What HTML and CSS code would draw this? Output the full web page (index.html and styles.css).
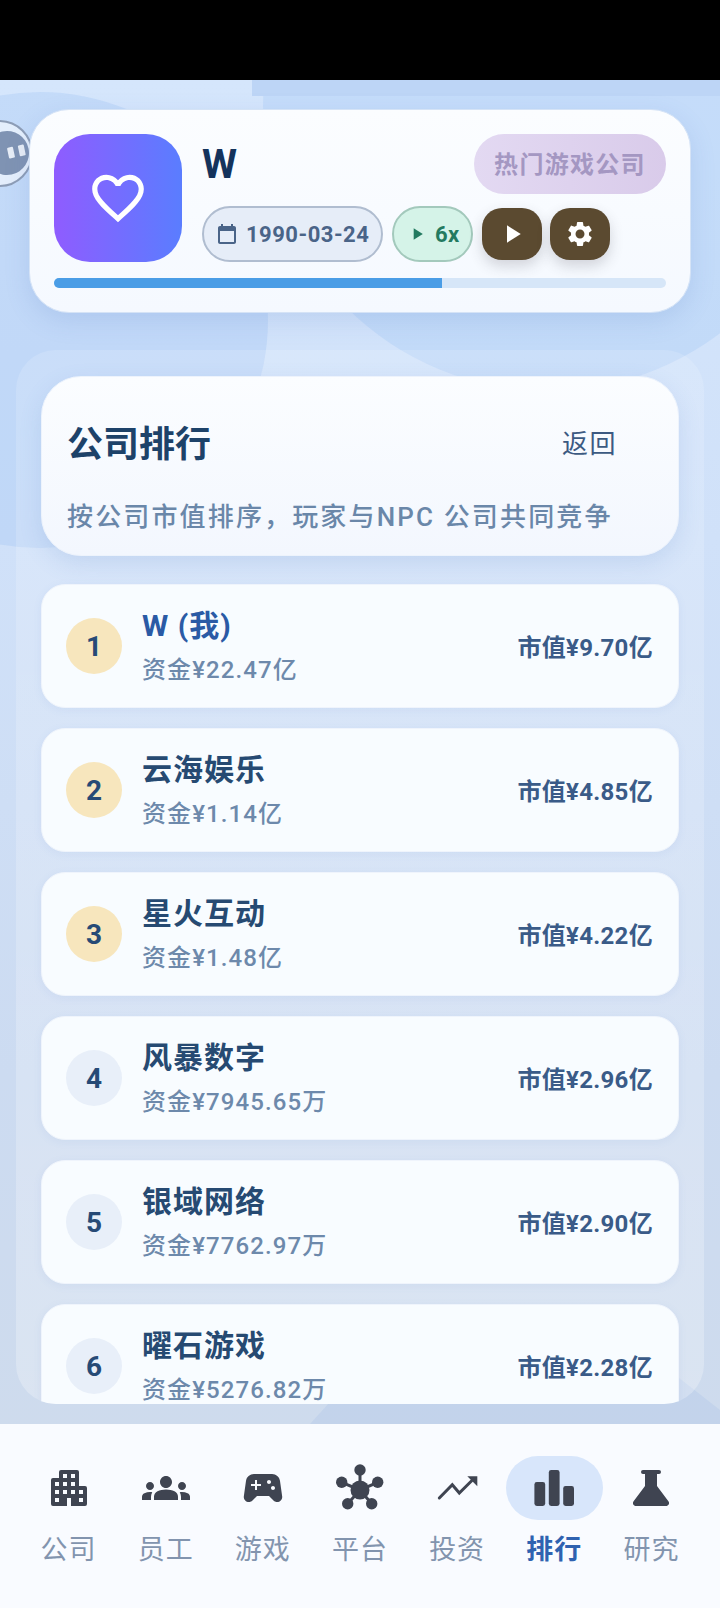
FILE: index.html
```html
<!DOCTYPE html>
<html lang="zh">
<head>
<meta charset="UTF-8">
<title>公司排行</title>
<link rel="stylesheet" href="styles.css">
</head>
<body>
<div class="statusbar"></div>
<div class="app">
    <div class="bg-left"></div>
    <div class="bg-right"></div>
    <div class="bg-band"></div>
    <div class="bg-bottom"></div>

    <div class="float-btn">
        <div class="float-inner">
            <span class="pause-bar"></span>
            <span class="pause-bar"></span>
        </div>
    </div>

    <section class="top-card">
        <div class="top-main">
            <div class="logo">
                <svg viewBox="0 0 24 24" width="62" height="62"><path fill="#fff" d="M16.5 3c-1.74 0-3.41.81-4.5 2.09C10.91 3.81 9.24 3 7.5 3 4.42 3 2 5.42 2 8.5c0 3.78 3.4 6.86 8.55 11.54L12 21.35l1.45-1.32C18.6 15.36 22 12.28 22 8.5 22 5.42 19.58 3 16.5 3zm-4.4 15.55l-.1.1-.1-.1C7.14 14.24 4 11.39 4 8.5 4 6.5 5.5 5 7.5 5c1.54 0 3.04.99 3.57 2.36h1.87C13.46 5.99 14.96 5 16.5 5c2 0 3.5 1.5 3.5 3.5 0 2.89-3.14 5.74-7.9 10.05z"/></svg>
            </div>
            <div class="top-info">
                <div class="top-line">
                    <div class="company-name">W</div>
                    <div class="hot-tag">热门游戏公司</div>
                </div>
                <div class="top-tools">
                    <div class="pill pill-date">
                        <svg viewBox="0 0 24 24" width="24" height="24"><path fill="#4a6488" d="M19 4h-1V2h-2v2H8V2H6v2H5c-1.1 0-2 .9-2 2v14c0 1.1.9 2 2 2h14c1.1 0 2-.9 2-2V6c0-1.1-.9-2-2-2zm0 16H5V9h14v11z"/></svg>
                        <span>1990-03-24</span>
                    </div>
                    <div class="pill pill-speed">
                        <svg viewBox="0 0 24 24" width="20" height="20"><path fill="#237a60" d="M8 5v14l11-7z"/></svg>
                        <span>6x</span>
                    </div>
                    <div class="tool-btn">
                        <svg viewBox="0 0 24 24" width="30" height="30"><path fill="#fff" d="M8 5v14l11-7z"/></svg>
                    </div>
                    <div class="tool-btn">
                        <svg viewBox="0 0 24 24" width="30" height="30"><path fill="#fff" d="M19.14 12.94c.04-.3.06-.61.06-.94 0-.32-.02-.64-.07-.94l2.03-1.58c.18-.14.23-.41.12-.61l-1.92-3.32c-.12-.22-.37-.29-.59-.22l-2.39.96c-.5-.38-1.03-.7-1.62-.94l-.36-2.54c-.04-.24-.24-.41-.48-.41h-3.84c-.24 0-.43.17-.47.41l-.36 2.54c-.59.24-1.13.57-1.62.94l-2.39-.96c-.22-.08-.47 0-.59.22L2.74 8.87c-.12.21-.08.47.12.61l2.03 1.58c-.05.3-.09.63-.09.94s.02.64.07.94l-2.03 1.58c-.18.14-.23.41-.12.61l1.92 3.32c.12.22.37.29.59.22l2.39-.96c.5.38 1.03.7 1.62.94l.36 2.54c.05.24.24.41.48.41h3.84c.24 0 .44-.17.47-.41l.36-2.54c.59-.24 1.13-.56 1.62-.94l2.39.96c.22.08.47 0 .59-.22l1.92-3.32c.12-.22.07-.47-.12-.61l-2.01-1.58zM12 15.6c-1.98 0-3.6-1.62-3.6-3.6s1.62-3.6 3.6-3.6 3.6 1.62 3.6 3.6-1.62 3.6-3.6 3.6z"/></svg>
                    </div>
                </div>
            </div>
        </div>
        <div class="progress"><div class="progress-fill"></div></div>
    </section>

    <main class="panel">
        <div class="head-card">
            <div class="head-line">
                <h1 class="head-title">公司排行</h1>
                <span class="head-back">返回</span>
            </div>
            <p class="head-sub">按公司市值排序，玩家与NPC 公司共同竞争</p>
        </div>

        <div class="rank-list">
            <div class="rank-row">
                <div class="rank-no rank-top">1</div>
                <div class="rank-info">
                    <div class="rank-name rank-me">W (我)</div>
                    <div class="rank-cash">资金¥22.47亿</div>
                </div>
                <div class="rank-value">市值¥9.70亿</div>
            </div>
            <div class="rank-row">
                <div class="rank-no rank-top">2</div>
                <div class="rank-info">
                    <div class="rank-name">云海娱乐</div>
                    <div class="rank-cash">资金¥1.14亿</div>
                </div>
                <div class="rank-value">市值¥4.85亿</div>
            </div>
            <div class="rank-row">
                <div class="rank-no rank-top">3</div>
                <div class="rank-info">
                    <div class="rank-name">星火互动</div>
                    <div class="rank-cash">资金¥1.48亿</div>
                </div>
                <div class="rank-value">市值¥4.22亿</div>
            </div>
            <div class="rank-row">
                <div class="rank-no">4</div>
                <div class="rank-info">
                    <div class="rank-name">风暴数字</div>
                    <div class="rank-cash">资金¥7945.65万</div>
                </div>
                <div class="rank-value">市值¥2.96亿</div>
            </div>
            <div class="rank-row">
                <div class="rank-no">5</div>
                <div class="rank-info">
                    <div class="rank-name">银域网络</div>
                    <div class="rank-cash">资金¥7762.97万</div>
                </div>
                <div class="rank-value">市值¥2.90亿</div>
            </div>
            <div class="rank-row">
                <div class="rank-no">6</div>
                <div class="rank-info">
                    <div class="rank-name">曜石游戏</div>
                    <div class="rank-cash">资金¥5276.82万</div>
                </div>
                <div class="rank-value">市值¥2.28亿</div>
            </div>
        </div>
    </main>

    <nav class="tabbar">
        <div class="tab">
            <span class="tab-icon"><svg viewBox="0 0 24 24" width="48" height="48"><path d="M17 11V4a1 1 0 0 0-1-1H8a1 1 0 0 0-1 1v3H4a1 1 0 0 0-1 1v12a1 1 0 0 0 1 1h7v-4h2v4h7a1 1 0 0 0 1-1v-8a1 1 0 0 0-1-1h-3zM7 19H5v-2h2v2zm0-4H5v-2h2v2zm0-4H5V9h2v2zm4 4H9v-2h2v2zm0-4H9V9h2v2zm0-4H9V5h2v2zm4 8h-2v-2h2v2zm0-4h-2V9h2v2zm0-4h-2V5h2v2zm4 12h-2v-2h2v2zm0-4h-2v-2h2v2z"/></svg></span>
            <span class="tab-label">公司</span>
        </div>
        <div class="tab">
            <span class="tab-icon"><svg viewBox="0 0 24 24" width="48" height="48"><path d="M12 12.75c1.63 0 3.07.39 4.24.9 1.08.48 1.76 1.56 1.76 2.73V18H6v-1.61c0-1.18.68-2.26 1.76-2.73 1.17-.52 2.61-.91 4.24-.91zM4 13c1.1 0 2-.9 2-2s-.9-2-2-2-2 .9-2 2 .9 2 2 2zm1.13 1.1c-.37-.06-.74-.1-1.13-.1-.99 0-1.93.21-2.78.58C.48 14.9 0 15.62 0 16.43V18h4.5v-1.61c0-.83.23-1.61.63-2.29zM20 13c1.1 0 2-.9 2-2s-.9-2-2-2-2 .9-2 2 .9 2 2 2zm4 3.43c0-.81-.48-1.53-1.22-1.85-.85-.37-1.79-.58-2.78-.58-.39 0-.76.04-1.13.1.4.68.63 1.46.63 2.29V18H24v-1.57zM12 6c1.66 0 3 1.34 3 3s-1.34 3-3 3-3-1.34-3-3 1.34-3 3-3z"/></svg></span>
            <span class="tab-label">员工</span>
        </div>
        <div class="tab">
            <span class="tab-icon"><svg viewBox="0 0 24 24" width="48" height="48"><path d="M21.58 16.09l-1.09-7.66C20.21 6.46 18.52 5 16.53 5H7.47C5.48 5 3.79 6.46 3.51 8.43l-1.09 7.66C2.2 17.63 3.39 19 4.94 19c.68 0 1.32-.27 1.8-.75L9 16h6l2.25 2.25c.48.48 1.13.75 1.8.75 1.56 0 2.75-1.37 2.53-2.91zM11 11H9v2H8v-2H6v-1h2V8h1v2h2v1zm4-1c-.55 0-1-.45-1-1s.45-1 1-1 1 .45 1 1-.45 1-1 1zm2 3c-.55 0-1-.45-1-1s.45-1 1-1 1 .45 1 1-.45 1-1 1z"/></svg></span>
            <span class="tab-label">游戏</span>
        </div>
        <div class="tab">
            <span class="tab-icon"><svg viewBox="0 0 48 48" width="48" height="48"><path class="icon-line" d="M24 6v20M5.7 18.3 24 26l17.7-7.7M11.7 39.7 24 26l11.7 13.7"/><circle cx="24" cy="26" r="9.5"/><circle cx="24" cy="6" r="5.7"/><circle cx="5.7" cy="18.3" r="5.7"/><circle cx="41.7" cy="18.3" r="5.7"/><circle cx="11.7" cy="39.7" r="5.7"/><circle cx="35.7" cy="39.7" r="5.7"/></svg></span>
            <span class="tab-label">平台</span>
        </div>
        <div class="tab">
            <span class="tab-icon"><svg viewBox="0 0 48 48" width="48" height="48"><path class="icon-line" d="M6.3 34 19.3 20.7 26.3 29 38.7 16.7"/><path d="M34.3 12.3h10v10z"/></svg></span>
            <span class="tab-label">投资</span>
        </div>
        <div class="tab tab-active">
            <span class="tab-icon"><svg viewBox="0 0 24 24" width="48" height="48"><rect x="2.2" y="9" width="5.4" height="12" rx="1.2"/><rect x="9.4" y="3" width="5.4" height="18" rx="1.2"/><rect x="16.6" y="11" width="5.4" height="10" rx="1.2"/></svg></span>
            <span class="tab-label">排行</span>
        </div>
        <div class="tab">
            <span class="tab-icon"><svg viewBox="0 0 24 24" width="48" height="48"><path d="M8 3h8a1 1 0 0 1 0 2h-1v6l5.7 7.6c.8 1.1 0 2.4-1.2 2.4H4.5c-1.2 0-2-1.3-1.2-2.4L9 11V5H8a1 1 0 0 1 0-2z"/></svg></span>
            <span class="tab-label">研究</span>
        </div>
    </nav>
</div>
</body>
</html>
```

FILE: styles.css
```css
*{margin:0;padding:0;box-sizing:border-box;}
html,body{width:720px;height:1608px;overflow:hidden;}
body{background:#000;font-family:Roboto,"Noto Sans CJK SC",sans-serif;}

.statusbar{height:80px;background:#000;}
.app{position:relative;height:1528px;overflow:hidden;padding:29px 29px 0;background:linear-gradient(180deg,#d5e6fc 0%,#d0e1f9 30%,#ccdbf1 65%,#cfdbeb 100%);}

/* background shapes */
.bg-left{position:absolute;left:-188px;top:12px;width:456px;height:456px;border-radius:50%;background:rgba(110,165,240,.17);}
.bg-right{position:absolute;left:263px;top:-259px;width:570px;height:570px;border-radius:50%;background:rgba(110,165,240,.15);}
.bg-band{position:absolute;left:252px;right:0;top:0;height:16px;background:#bdd5f6;}
.bg-bottom{position:absolute;left:310px;top:1296px;width:410px;height:48px;background:rgba(100,150,230,.1);clip-path:polygon(0 100%,40px 4px,369px 2px,100% 34px,100% 100%);}

/* floating button */
.float-btn{position:absolute;left:-34px;top:40px;width:67px;height:67px;border-radius:50%;border:2px solid #8d9db6;background:rgba(255,255,255,.55);}
.float-inner{position:absolute;left:17px;top:9px;width:44px;height:44px;border-radius:50%;background:#7f93b3;display:flex;align-items:center;justify-content:center;gap:5px;padding-left:18px;transform:rotate(-12deg);}
.pause-bar{width:6px;height:11px;border-radius:1px;background:#e7edf6;}

/* top card */
.top-card{position:relative;width:662px;height:204px;padding:24px 24px 0;border-radius:40px;background:linear-gradient(180deg,#fbfdff,#f5f9ff);border:1px solid #d5e3f6;box-shadow:0 8px 24px rgba(90,130,200,.18);}
.top-main{display:flex;gap:20px;height:128px;}
.logo{width:128px;height:128px;flex:none;border-radius:36px;background:linear-gradient(90deg,#8f5cff,#5a7dff);display:flex;align-items:center;justify-content:center;}
.top-info{flex:1;display:flex;flex-direction:column;justify-content:space-between;}
.top-line{display:flex;justify-content:space-between;align-items:flex-start;}
.company-name{font-size:40px;font-weight:700;line-height:62px;color:#14335c;}
.hot-tag{width:192px;height:60px;padding-bottom:3px;border-radius:30px;background:linear-gradient(90deg,#e3d9f2,#d9cbea);color:#a497c2;font-size:24px;font-weight:700;letter-spacing:1.3px;display:flex;align-items:center;justify-content:center;}
.top-tools{display:flex;align-items:center;gap:8px;height:56px;}
.pill{height:56px;border-radius:28px;border:2px solid;display:flex;align-items:center;font-size:22px;font-weight:700;letter-spacing:.5px;}
.pill-date{width:181px;margin-right:1px;padding-left:11px;gap:7px;color:#4a6488;background:#e6edf8;border-color:#b0bdd0;}
.pill-speed{width:81px;margin-right:1px;padding-left:13px;gap:8px;color:#237a60;background:#d5f3e8;border-color:#a3c9bc;}
.tool-btn{width:60px;height:52px;border-radius:20px;background:#5b4a30;display:flex;align-items:center;justify-content:center;box-shadow:0 6px 14px rgba(60,60,70,.2);}
.progress{height:10px;margin-top:16px;border-radius:5px;overflow:hidden;background:#d6e6f8;}
.progress-fill{width:63.4%;height:100%;background:#4a9de6;}

/* panel */
.panel{position:absolute;left:16px;top:270px;width:688px;height:1054px;padding:26px 25px 0;border-radius:40px;background:linear-gradient(180deg,rgba(255,255,255,.14),rgba(255,255,255,.26));overflow:hidden;}
.head-card{height:180px;padding:41px 25px 0;border-radius:40px;background:linear-gradient(180deg,#fbfdff,#f3f7fe);box-shadow:0 8px 22px rgba(90,130,200,.16);border:1px solid #edf3fc;}
.head-line{display:flex;justify-content:space-between;align-items:center;height:46px;}
.head-title{font-size:36px;font-weight:700;color:#1d4269;}
.head-back{font-size:26px;letter-spacing:1.5px;color:#3c5a82;margin-right:36px;}
.head-sub{margin-top:35px;font-size:26px;letter-spacing:2.15px;line-height:36px;color:#6a87a9;font-weight:500;white-space:nowrap;}

.rank-list{display:flex;flex-direction:column;gap:20px;margin-top:28px;}
.rank-row{height:124px;flex:none;padding:0 25px 0 24px;border-radius:24px;background:#f8fcff;border:1px solid #eff4fc;display:flex;align-items:center;box-shadow:0 2px 8px rgba(90,130,200,.08);}
.rank-no{width:56px;height:56px;flex:none;border-radius:50%;background:#e8eff9;color:#264a76;font-size:28px;font-weight:700;display:flex;align-items:center;justify-content:center;}
.rank-top{background:#f7e6bd;}
.rank-info{flex:1;margin-left:20px;padding-top:2px;display:flex;flex-direction:column;}
.rank-name{font-size:30px;font-weight:700;letter-spacing:1px;line-height:40px;color:#264a72;}
.rank-me{color:#2a5aa5;}
.rank-cash{font-size:24px;letter-spacing:1.1px;line-height:36px;font-weight:500;color:#6d89ab;margin-top:6px;}
.rank-value{font-size:24px;font-weight:700;letter-spacing:.3px;color:#3a5b88;margin-bottom:2px;}

/* tab bar */
.tabbar{position:absolute;left:0;right:0;bottom:0;height:184px;padding:32px 20px 0;background:#f9fbff;display:flex;}
.tab{flex:1;display:flex;flex-direction:column;align-items:center;}
.tab-icon{width:97px;height:64px;border-radius:32px;display:flex;align-items:center;justify-content:center;}
.tab-icon svg{fill:#3f4451;}
.tab-icon .icon-line{fill:none;stroke:#3f4451;stroke-width:3;stroke-linecap:round;stroke-linejoin:miter;}
.tab-active .tab-icon{background:#d8e6fb;}
.tab-label{margin-top:11px;font-size:27px;letter-spacing:1px;line-height:38px;color:#8294ae;}
.tab-active .tab-label{color:#2f62b0;font-weight:700;}
```
